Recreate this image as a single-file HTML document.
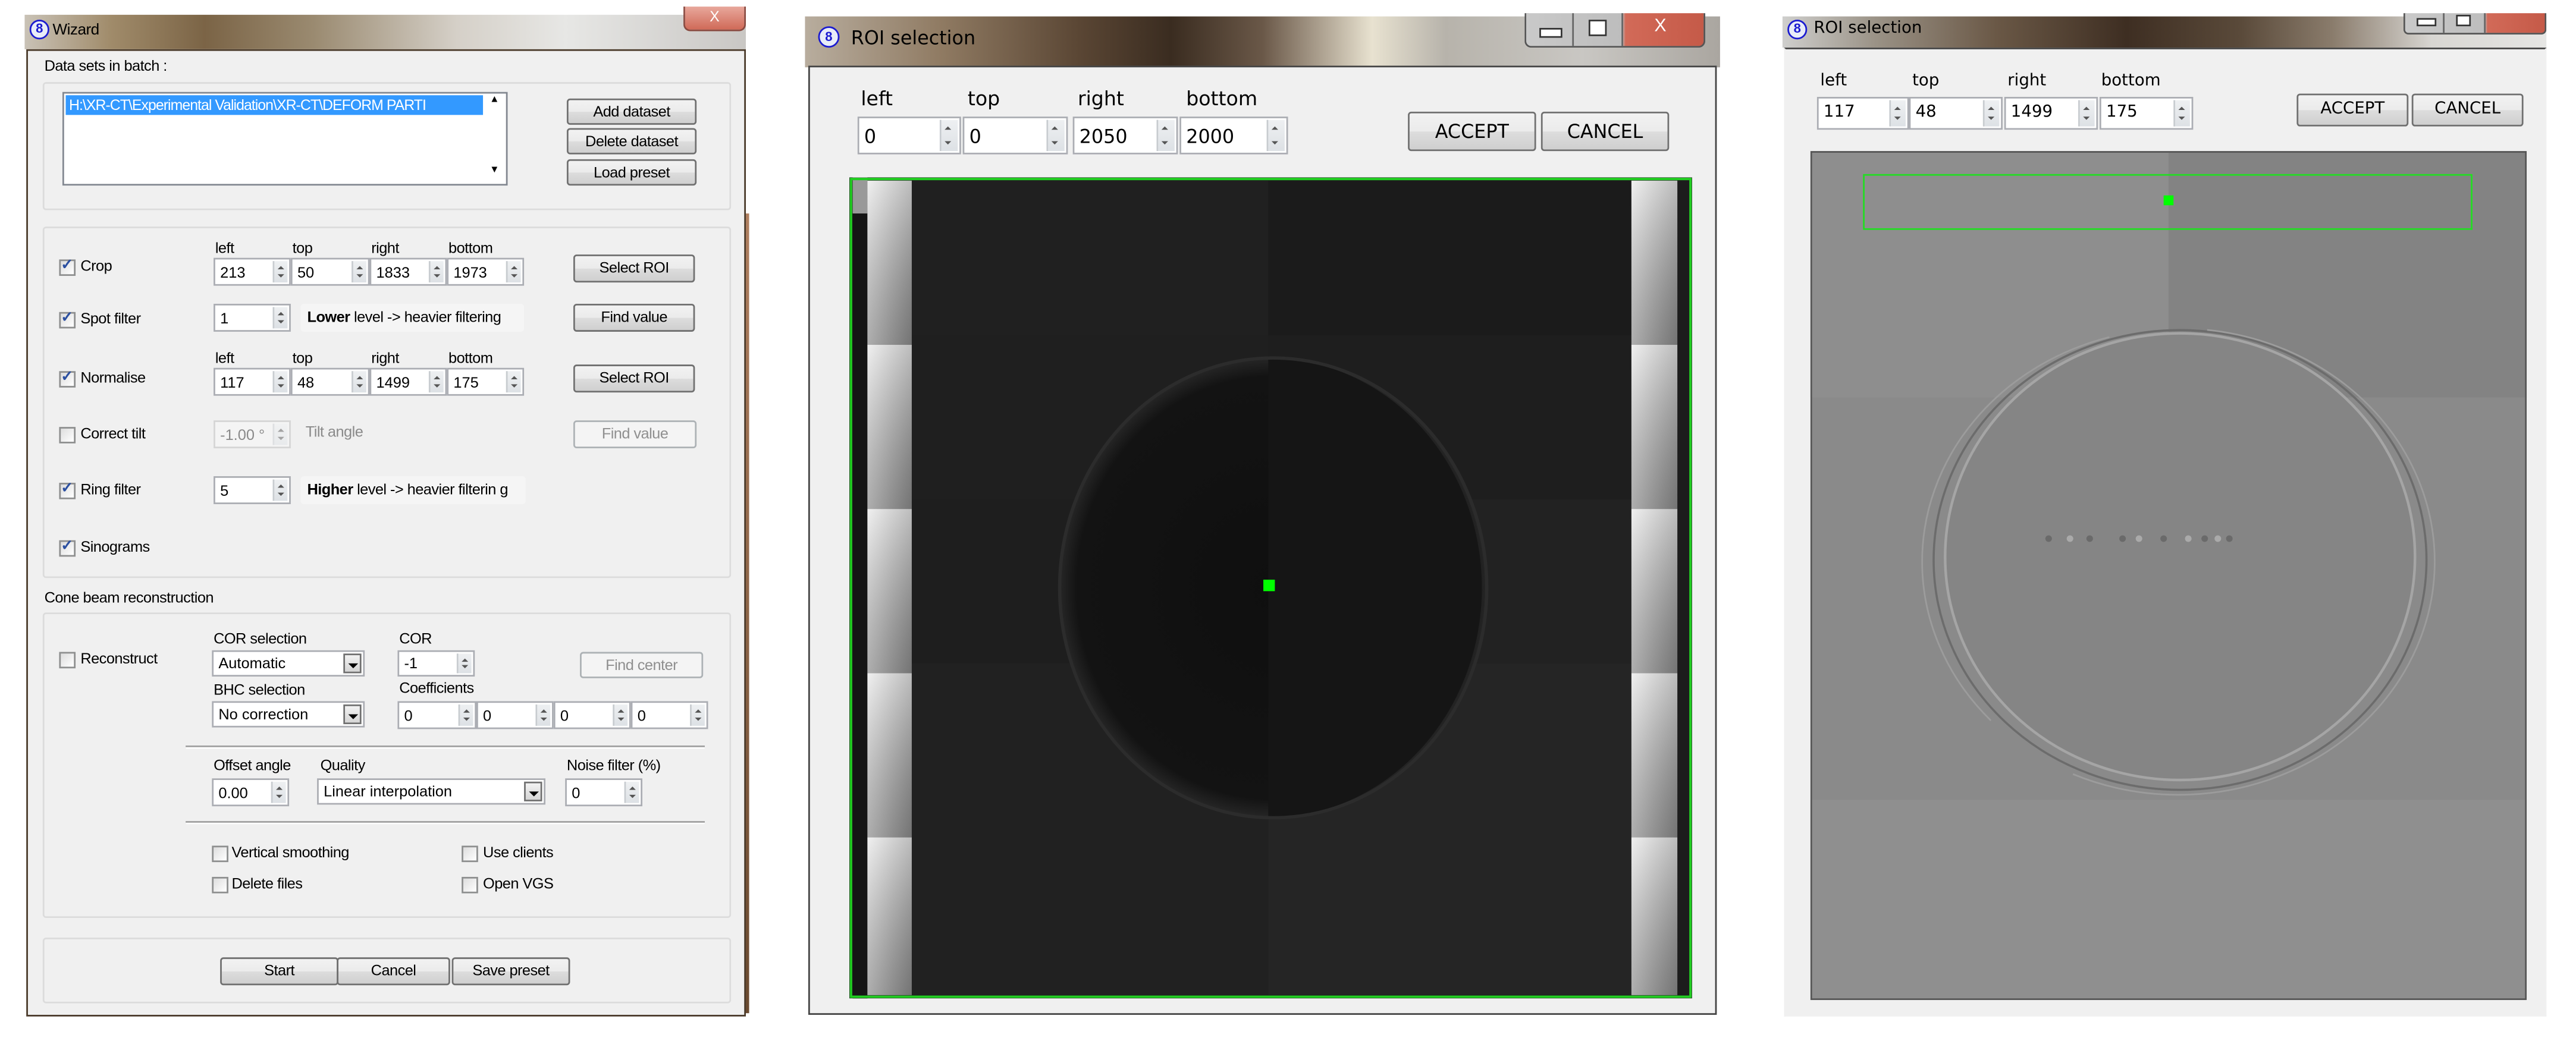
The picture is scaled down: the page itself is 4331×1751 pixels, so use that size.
<!DOCTYPE html>
<html><head><meta charset="utf-8">
<style>
html,body{margin:0;padding:0;background:#fff;overflow:hidden}
body{width:4331px;height:1751px;position:relative}
#st{position:absolute;left:0;top:0;width:1568px;height:634px;transform:scale(2.7621);transform-origin:0 0;font-family:"Liberation Sans",sans-serif;color:#000}
.a{position:absolute}
.t{position:absolute;font-size:9.2px;white-space:nowrap;letter-spacing:-0.2px}
.tb{position:absolute;background:linear-gradient(90deg,#c9c2b6 0%,#a08b6a 12%,#7b6446 25%,#9a8a70 40%,#d5d0c8 60%,#e7e7e5 75%,#c9c7c4 100%)}
.body{position:absolute;background:#f0f0f0;border:1px solid #555}
.grp{position:absolute;border:1px solid #dcdcdc;border-radius:2px;background:#f0f0f0}
.btn{position:absolute;border:1px solid #707070;border-radius:2px;background:linear-gradient(#f2f2f2,#ebebeb 50%,#dddddd 51%,#cfcfcf);font-size:9.2px;text-align:center;box-sizing:border-box;letter-spacing:-0.2px}
.btn.dis{border-color:#adb2b5;color:#8f8f8f;background:#f4f4f4}
.sp{position:absolute;background:#fff;border:1px solid #abadb3;box-sizing:border-box;font-size:9.2px}
.sp span{position:absolute;left:3px}
.sp i{position:absolute;right:1px;top:1px;bottom:1px;width:8px;background:linear-gradient(#eef0f2,#dde1e5);border-left:1px solid #c8ccd0}
.sp i:before{content:"";position:absolute;left:2px;top:22%;border:2px solid transparent;border-bottom:2.5px solid #555;border-top:0}
.sp i:after{content:"";position:absolute;left:2px;bottom:22%;border:2px solid transparent;border-top:2.5px solid #555;border-bottom:0}
.cb{position:absolute;width:8px;height:8px;border:1px solid #8e8f8f;background:linear-gradient(135deg,#ddd,#fff)}
.cb.on:after{content:"✓";position:absolute;left:0;top:-3px;font-size:9px;color:#2b4fa0;font-weight:bold}
.cmb{position:absolute;background:#fff;border:1px solid #abadb3;box-sizing:border-box;font-size:9.2px}
.cmb span{position:absolute;left:3px}
.cmb i{position:absolute;right:1px;top:1px;bottom:1px;width:11px;background:linear-gradient(#f2f2f2,#d5d5d5);border:1px solid #707070;box-sizing:border-box}
.cmb i:after{content:"";position:absolute;left:2px;top:5px;border:3px solid transparent;border-top:3.5px solid #000;border-bottom:0}
.ic{position:absolute;width:11px;height:11px;border-radius:50%;border:1.3px solid #1a1ad0;background:#e8ecf8;font-size:8px;color:#1a1ad0;text-align:center;line-height:11px;font-weight:bold}
.v{font-family:"DejaVu Sans",sans-serif}
.v .sp,.v .btn{font-size:11.5px;letter-spacing:0}
</style></head><body><div id="st">

<!-- WIZARD -->
<div class="tb" style="left:15px;top:9px;width:439px;height:21px"></div>
<div class="ic" style="left:18px;top:12px;width:10px;height:10px;line-height:10px">8</div>
<div class="t" style="left:32px;top:13px;font-size:9.5px">Wizard</div>
<div class="a" style="left:416px;top:4px;width:36px;height:14px;background:linear-gradient(#e8a89c,#d06a58);border:1px solid #8a4a40;border-top:0;border-radius:0 0 4px 4px;color:#fff;font-size:9px;text-align:center;line-height:12px">X</div>
<div class="a" style="left:452px;top:130px;width:4px;height:487px;background:linear-gradient(#b08060,#6a4a30)"></div>
<div class="body" style="left:16px;top:30px;width:436px;height:587px;border-color:#4a3a2a"></div>
<div class="t" style="left:27px;top:35px">Data sets in batch :</div>
<div class="grp" style="left:26px;top:50px;width:417px;height:76px"></div>
<div class="a" style="left:38px;top:56px;width:271px;height:57px;background:#fff;border:1px solid #828790;box-sizing:border-box"></div>
<div class="a" style="left:40px;top:58px;width:254px;height:12px;background:#3399ff"></div>
<div class="t" style="left:42px;top:59px;color:#fff;font-size:9px;letter-spacing:-0.35px">H:\XR-CT\Experimental Validation\XR-CT\DEFORM PARTI</div>
<div class="t" style="left:298px;top:58px;font-size:6px">▲</div>
<div class="t" style="left:298px;top:101px;font-size:6px">▼</div>
<div class="btn" style="left:345px;top:60px;width:79px;height:16px;line-height:14px">Add dataset</div>
<div class="btn" style="left:345px;top:78px;width:79px;height:16px;line-height:14px">Delete dataset</div>
<div class="btn" style="left:345px;top:97px;width:79px;height:16px;line-height:14px">Load preset</div>

<div class="grp" style="left:26px;top:138px;width:417px;height:212px"></div>
<div class="cb on" style="left:36px;top:158px"></div><div class="t" style="left:49px;top:157px">Crop</div>
<div class="t" style="left:131px;top:146px">left</div><div class="t" style="left:178px;top:146px">top</div><div class="t" style="left:226px;top:146px">right</div><div class="t" style="left:273px;top:146px">bottom</div>
<div class="sp" style="left:130px;top:157px;width:47px;height:17px"><span style="top:3px">213</span><i></i></div>
<div class="sp" style="left:177px;top:157px;width:48px;height:17px"><span style="top:3px">50</span><i></i></div>
<div class="sp" style="left:225px;top:157px;width:47px;height:17px"><span style="top:3px">1833</span><i></i></div>
<div class="sp" style="left:272px;top:157px;width:47px;height:17px"><span style="top:3px">1973</span><i></i></div>
<div class="btn" style="left:349px;top:155px;width:74px;height:17px;line-height:15px">Select ROI</div>

<div class="cb on" style="left:36px;top:190px"></div><div class="t" style="left:49px;top:189px">Spot filter</div>
<div class="sp" style="left:130px;top:185px;width:47px;height:17px"><span style="top:3px">1</span><i></i></div>
<div class="a" style="left:183px;top:185px;width:136px;height:17px;background:#f5f5f5;border-radius:2px;overflow:hidden"><div class="t" style="left:4px;top:3px"><b>Lower</b> level -&gt; heavier filtering</div></div>
<div class="btn" style="left:349px;top:185px;width:74px;height:17px;line-height:15px">Find value</div>

<div class="cb on" style="left:36px;top:226px"></div><div class="t" style="left:49px;top:225px">Normalise</div>
<div class="t" style="left:131px;top:213px">left</div><div class="t" style="left:178px;top:213px">top</div><div class="t" style="left:226px;top:213px">right</div><div class="t" style="left:273px;top:213px">bottom</div>
<div class="sp" style="left:130px;top:224px;width:47px;height:17px"><span style="top:3px">117</span><i></i></div>
<div class="sp" style="left:177px;top:224px;width:48px;height:17px"><span style="top:3px">48</span><i></i></div>
<div class="sp" style="left:225px;top:224px;width:47px;height:17px"><span style="top:3px">1499</span><i></i></div>
<div class="sp" style="left:272px;top:224px;width:47px;height:17px"><span style="top:3px">175</span><i></i></div>
<div class="btn" style="left:349px;top:222px;width:74px;height:17px;line-height:15px">Select ROI</div>

<div class="cb" style="left:36px;top:260px"></div><div class="t" style="left:49px;top:259px">Correct tilt</div>
<div class="sp" style="left:130px;top:256px;width:47px;height:17px;border-color:#d5d5d5;background:#f4f4f4;color:#8a8a8a"><span style="top:3px">-1.00 °</span><i style="opacity:.5"></i></div>
<div class="t" style="left:186px;top:258px;color:#8a8a8a">Tilt angle</div>
<div class="btn dis" style="left:349px;top:256px;width:75px;height:17px;line-height:15px">Find value</div>

<div class="cb on" style="left:36px;top:294px"></div><div class="t" style="left:49px;top:293px">Ring filter</div>
<div class="sp" style="left:130px;top:290px;width:47px;height:17px"><span style="top:3px">5</span><i></i></div>
<div class="a" style="left:183px;top:290px;width:137px;height:17px;background:#f5f5f5;border-radius:2px;overflow:hidden"><div class="t" style="left:4px;top:3px"><b>Higher</b> level -&gt; heavier filterin g</div></div>

<div class="cb on" style="left:36px;top:329px"></div><div class="t" style="left:49px;top:328px">Sinograms</div>

<div class="t" style="left:27px;top:359px">Cone beam reconstruction</div>
<div class="grp" style="left:26px;top:373px;width:417px;height:184px"></div>
<div class="cb" style="left:36px;top:397px"></div><div class="t" style="left:49px;top:396px">Reconstruct</div>
<div class="t" style="left:130px;top:384px">COR selection</div><div class="t" style="left:243px;top:384px">COR</div>
<div class="cmb" style="left:129px;top:396px;width:93px;height:16px"><span style="top:2px">Automatic</span><i></i></div>
<div class="sp" style="left:242px;top:396px;width:47px;height:16px"><span style="top:2px">-1</span><i></i></div>
<div class="btn dis" style="left:353px;top:397px;width:75px;height:16px;line-height:14px">Find center</div>
<div class="t" style="left:130px;top:415px">BHC selection</div><div class="t" style="left:243px;top:414px">Coefficients</div>
<div class="cmb" style="left:129px;top:427px;width:93px;height:16px"><span style="top:2px">No correction</span><i></i></div>
<div class="sp" style="left:242px;top:427px;width:48px;height:17px"><span style="top:3px">0</span><i></i></div>
<div class="sp" style="left:290px;top:427px;width:47px;height:17px"><span style="top:3px">0</span><i></i></div>
<div class="sp" style="left:337px;top:427px;width:47px;height:17px"><span style="top:3px">0</span><i></i></div>
<div class="sp" style="left:384px;top:427px;width:47px;height:17px"><span style="top:3px">0</span><i></i></div>
<div class="a" style="left:113px;top:454px;width:316px;height:1px;background:#a0a0a0;border-bottom:1px solid #fff"></div>
<div class="t" style="left:130px;top:461px">Offset angle</div><div class="t" style="left:195px;top:461px">Quality</div><div class="t" style="left:345px;top:461px">Noise filter (%)</div>
<div class="sp" style="left:129px;top:474px;width:47px;height:17px"><span style="top:3px">0.00</span><i></i></div>
<div class="cmb" style="left:193px;top:474px;width:139px;height:16px"><span style="top:2px">Linear interpolation</span><i></i></div>
<div class="sp" style="left:344px;top:474px;width:47px;height:17px"><span style="top:3px">0</span><i></i></div>
<div class="a" style="left:113px;top:500px;width:316px;height:1px;background:#a0a0a0;border-bottom:1px solid #fff"></div>
<div class="cb" style="left:129px;top:515px"></div><div class="t" style="left:141px;top:514px">Vertical smoothing</div>
<div class="cb" style="left:281px;top:515px"></div><div class="t" style="left:294px;top:514px">Use clients</div>
<div class="cb" style="left:129px;top:534px"></div><div class="t" style="left:141px;top:533px">Delete files</div>
<div class="cb" style="left:281px;top:534px"></div><div class="t" style="left:294px;top:533px">Open VGS</div>

<div class="grp" style="left:26px;top:571px;width:417px;height:38px"></div>
<div class="btn" style="left:134px;top:583px;width:72px;height:17px;line-height:15px">Start</div>
<div class="btn" style="left:205px;top:583px;width:69px;height:17px;line-height:15px">Cancel</div>
<div class="btn" style="left:275px;top:583px;width:72px;height:17px;line-height:15px">Save preset</div>

<!-- ROI 1 -->
<div class="tb" style="left:490px;top:10px;width:557px;height:31px;background:linear-gradient(90deg,#b8ad9e 0%,#8f7a62 15%,#5a4634 30%,#3a2c20 40%,#6a5848 50%,#e8e2d0 62%,#b7b3ab 70%,#c9c7c3 85%,#aaa6a0 100%)"></div>
<div class="ic" style="left:498px;top:16px">8</div>
<div class="t v" style="left:518px;top:16px;font-size:11.5px;letter-spacing:0">ROI selection</div>
<div class="a" style="left:928px;top:8px;width:108px;height:20px;border:1px solid #555;border-top:0;border-radius:0 0 4px 4px;background:linear-gradient(90deg,#c9c9c9 0,#bdbdbd 54%,#d26a58 56%,#c55a48 100%);overflow:hidden">
<div class="a" style="left:28px;top:0;width:1px;height:20px;background:#666"></div><div class="a" style="left:58px;top:0;width:1px;height:20px;background:#666"></div>
<div class="a" style="left:8px;top:9px;width:12px;height:4px;border:1px solid #333;background:#fff"></div>
<div class="a" style="left:38px;top:4px;width:9px;height:8px;border:1px solid #333;background:#fff"></div>
<div class="t" style="left:78px;top:2px;color:#fff;font-size:11px">X</div></div>
<div class="body" style="left:492px;top:40px;width:551px;height:576px;border-color:#444"></div>
<div class="v">
<div class="t" style="left:524px;top:53px;font-size:12px;letter-spacing:0">left</div>
<div class="t" style="left:589px;top:53px;font-size:12px;letter-spacing:0">top</div>
<div class="t" style="left:656px;top:53px;font-size:12px;letter-spacing:0">right</div>
<div class="t" style="left:722px;top:53px;font-size:12px;letter-spacing:0">bottom</div>
<div class="sp" style="left:522px;top:71px;width:63px;height:23px"><span style="top:4px">0</span><i style="width:10px"></i></div>
<div class="sp" style="left:586px;top:71px;width:64px;height:23px"><span style="top:4px">0</span><i style="width:10px"></i></div>
<div class="sp" style="left:653px;top:71px;width:64px;height:23px"><span style="top:4px">2050</span><i style="width:10px"></i></div>
<div class="sp" style="left:718px;top:71px;width:66px;height:23px"><span style="top:4px">2000</span><i style="width:10px"></i></div>
<div class="btn" style="left:857px;top:68px;width:78px;height:24px;line-height:22px">ACCEPT</div>
<div class="btn" style="left:938px;top:68px;width:78px;height:24px;line-height:22px">CANCEL</div>
</div>
<svg class="a" style="left:517px;top:108px" width="513" height="500" viewBox="0 0 513 500">
<defs>
<linearGradient id="bar" x1="0" y1="0" x2="1" y2="0"><stop offset="0" stop-color="#e8e8e8"/><stop offset=".5" stop-color="#c0c0c0"/><stop offset="1" stop-color="#9a9a9a"/></linearGradient>
<linearGradient id="bar2" x1="0" y1="0" x2="0" y2="1"><stop offset="0" stop-color="#fff" stop-opacity=".35"/><stop offset="1" stop-color="#000" stop-opacity=".25"/></linearGradient>
<radialGradient id="dk" cx=".5" cy=".5" r=".5"><stop offset="0" stop-color="#0f0f0f"/><stop offset=".92" stop-color="#131313"/><stop offset="1" stop-color="#262626"/></radialGradient>
</defs>
<rect width="513" height="500" fill="#1c1c1c"/>
<rect x="2" y="0" width="9" height="500" fill="#151515"/>
<rect x="2" y="0" width="9" height="22" fill="#999"/>
<rect x="11" y="2" width="27" height="496" fill="url(#bar)"/>
<rect x="476" y="2" width="28" height="496" fill="url(#bar)"/>
<g fill="url(#bar2)"><rect x="11" y="2" width="27" height="100"/><rect x="11" y="102" width="27" height="100"/><rect x="11" y="202" width="27" height="100"/><rect x="11" y="302" width="27" height="100"/><rect x="11" y="402" width="27" height="96"/>
<rect x="476" y="2" width="28" height="100"/><rect x="476" y="102" width="28" height="100"/><rect x="476" y="202" width="28" height="100"/><rect x="476" y="302" width="28" height="100"/><rect x="476" y="402" width="28" height="96"/></g>
<rect x="38" y="2" width="217" height="94" fill="#202020"/>
<rect x="255" y="2" width="221" height="94" fill="#1b1b1b"/>
<rect x="38" y="96" width="217" height="100" fill="#1f1f1f"/>
<rect x="255" y="96" width="221" height="100" fill="#1e1e1e"/>
<rect x="38" y="196" width="217" height="100" fill="#1e1e1e"/>
<rect x="255" y="196" width="221" height="100" fill="#222"/>
<rect x="38" y="296" width="217" height="202" fill="#212121"/>
<rect x="255" y="296" width="221" height="202" fill="#252525"/>
<ellipse cx="258" cy="250" rx="130" ry="140" fill="url(#dk)"/>
<path d="M255 110 A130 140 0 0 1 255 390 Z" fill="#151515"/>
<ellipse cx="258" cy="250" rx="130" ry="140" fill="none" stroke="#2c2c2c" stroke-width="2"/>
<rect x="1" y="1" width="511" height="498" fill="none" stroke="#22cc22" stroke-width="1.5"/>
<rect x="252" y="245" width="7" height="7" fill="#00ff00"/>
</svg>

<!-- ROI 2 -->
<div class="tb" style="left:1085px;top:10px;width:465px;height:19px;background:linear-gradient(90deg,#cfcfcd 0%,#9b9387 12%,#6a5846 28%,#3e2e22 45%,#5a4a3a 60%,#8a7c6c 72%,#d8d6d2 85%,#e6e6e4 100%)"></div>
<div class="ic" style="left:1088px;top:12px;width:10px;height:10px;line-height:10px">8</div>
<div class="t v" style="left:1104px;top:12px;font-size:10px;letter-spacing:0">ROI selection</div>
<div class="a" style="left:1463px;top:8px;width:85px;height:12px;border:1px solid #555;border-top:0;border-radius:0 0 3px 3px;background:linear-gradient(90deg,#c9c9c9 0,#bdbdbd 57%,#d26a58 59%,#c55a48 100%);overflow:hidden">
<div class="a" style="left:23px;top:0;width:1px;height:12px;background:#666"></div><div class="a" style="left:48px;top:0;width:1px;height:12px;background:#666"></div>
<div class="a" style="left:7px;top:3px;width:10px;height:3px;border:1px solid #333;background:#fff"></div>
<div class="a" style="left:31px;top:1px;width:7px;height:5px;border:1px solid #333;background:#fff"></div></div>
<div class="body" style="left:1086px;top:29px;width:462px;height:588px;border-color:#f0f0f0;border-top:1px solid #444"></div>
<div class="v">
<div class="t" style="left:1108px;top:44px;font-size:10px;letter-spacing:0">left</div>
<div class="t" style="left:1164px;top:44px;font-size:10px;letter-spacing:0">top</div>
<div class="t" style="left:1222px;top:44px;font-size:10px;letter-spacing:0">right</div>
<div class="t" style="left:1279px;top:44px;font-size:10px;letter-spacing:0">bottom</div>
<div class="sp" style="left:1106px;top:59px;width:56px;height:20px;font-size:10px"><span style="top:3px">117</span><i style="width:9px"></i></div>
<div class="sp" style="left:1162px;top:59px;width:57px;height:20px;font-size:10px"><span style="top:3px">48</span><i style="width:9px"></i></div>
<div class="sp" style="left:1220px;top:59px;width:57px;height:20px;font-size:10px"><span style="top:3px">1499</span><i style="width:9px"></i></div>
<div class="sp" style="left:1278px;top:59px;width:57px;height:20px;font-size:10px"><span style="top:3px">175</span><i style="width:9px"></i></div>
<div class="btn" style="left:1398px;top:57px;width:68px;height:20px;line-height:18px;font-size:10px">ACCEPT</div>
<div class="btn" style="left:1468px;top:57px;width:68px;height:20px;line-height:18px;font-size:10px">CANCEL</div>
</div>
<svg class="a" style="left:1102px;top:92px" width="436" height="517" viewBox="0 0 436 517">
<rect width="436" height="517" fill="#8a8a8a"/>
<rect x="0" y="0" width="218" height="150" fill="#8e8e8e"/>
<rect x="218" y="0" width="218" height="150" fill="#838383"/>
<rect x="0" y="395" width="436" height="122" fill="#8f8f8f"/>
<ellipse cx="225" cy="247" rx="143" ry="136" fill="#858585"/>
<ellipse cx="225" cy="247" rx="143" ry="136" fill="none" stroke="#a5a5a5" stroke-width="1.6"/>
<ellipse cx="225" cy="249" rx="150" ry="140" fill="none" stroke="#6c6c6c" stroke-width="1.3"/>
<ellipse cx="224" cy="250" rx="156" ry="142" fill="none" stroke="#9c9c9c" stroke-width="1" stroke-dasharray="300 60"/>
<g fill="#6a6a6a"><circle cx="145" cy="236" r="2"/><circle cx="170" cy="236" r="2"/><circle cx="190" cy="236" r="2"/><circle cx="215" cy="236" r="2"/><circle cx="240" cy="236" r="2"/><circle cx="255" cy="236" r="2"/></g>
<g fill="#aaa"><circle cx="158" cy="236" r="2"/><circle cx="200" cy="236" r="2"/><circle cx="230" cy="236" r="2"/><circle cx="248" cy="236" r="2"/></g>
<rect x="32.5" y="14.5" width="370" height="33" fill="none" stroke="#22dd22" stroke-width="1"/>
<rect x="215" y="27" width="6" height="6" fill="#00ff00"/>
<rect x="0.5" y="0.5" width="435" height="516" fill="none" stroke="#555" stroke-width="1"/>
</svg>

</div></body></html>
